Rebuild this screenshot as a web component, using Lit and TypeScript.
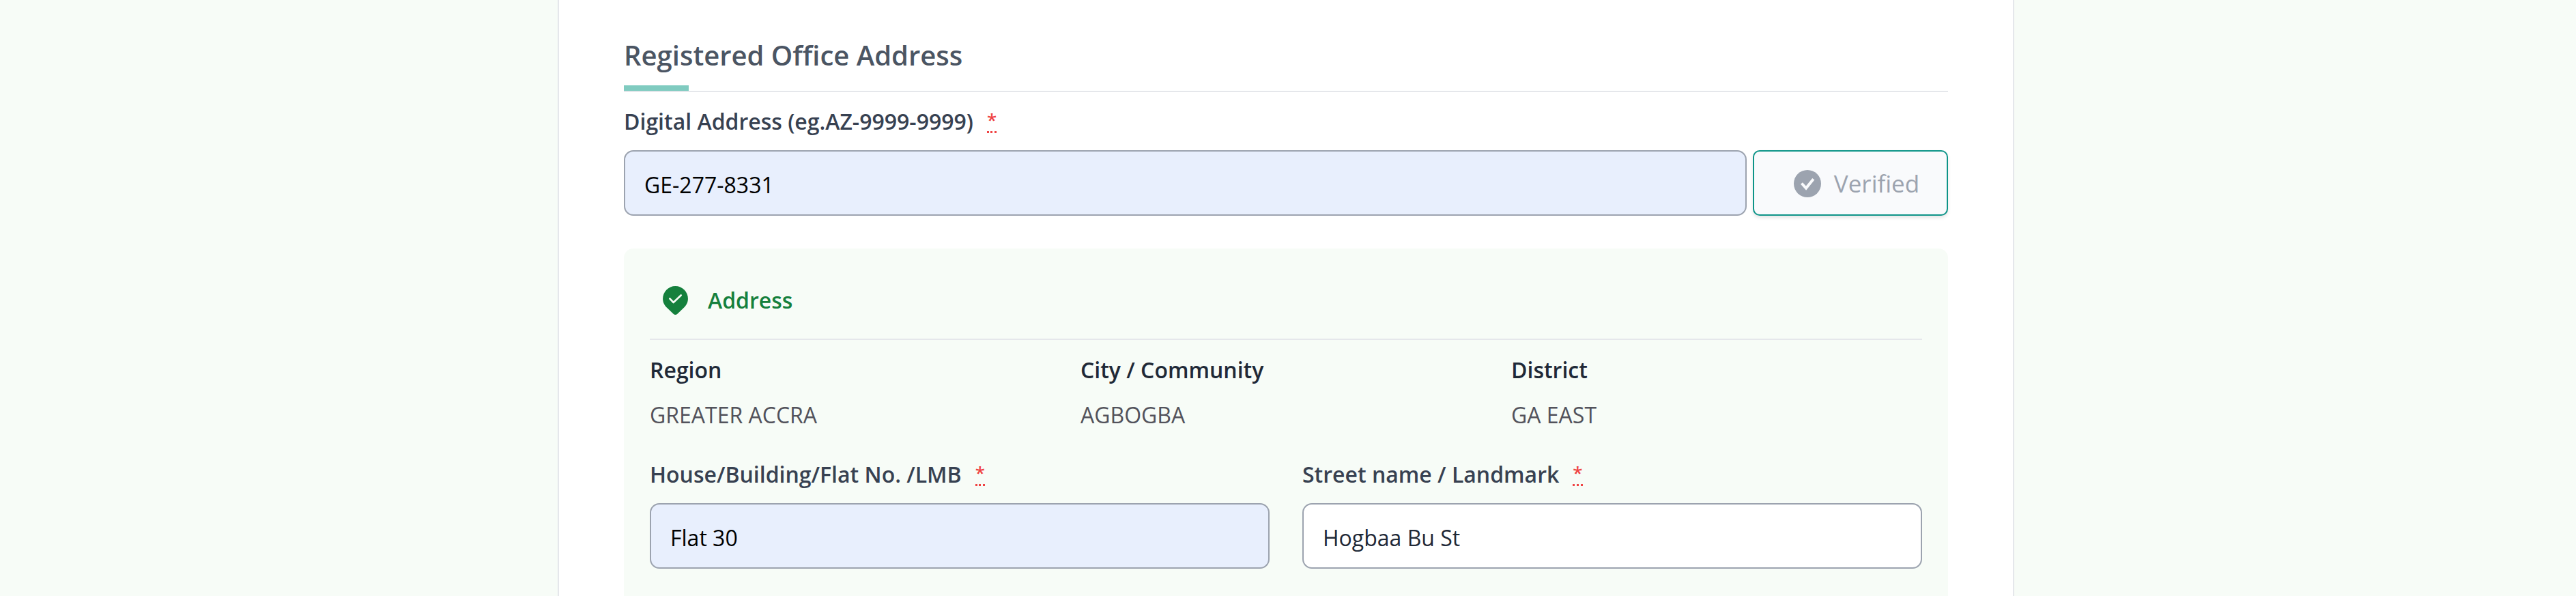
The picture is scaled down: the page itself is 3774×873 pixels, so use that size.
import { LitElement, html, css } from "lit";
import { customElement, property, state } from "lit/decorators.js";
import { classMap } from "lit/directives/class-map.js";

@customElement("text-field")
class TextField extends LitElement {
  @property() label = "";
  @property() value = "";
  @property({ type: Boolean }) filled = false;

  static styles = css`
    :host {
      display: block;
      min-width: 0;
    }
    .label {
      display: flex;
      align-items: flex-start;
      gap: 20px;
      height: 40px;
      margin-bottom: 22px;
      line-height: 40px;
      font-weight: 600;
      color: #374151;
      white-space: nowrap;
    }
    .required {
      border-bottom: 3px dotted #ef4444;
      font-size: 26px;
      font-weight: 600;
      line-height: 34px;
      color: #ef4444;
      text-decoration: none;
    }
    .row {
      display: flex;
      gap: 9px;
    }
    .input {
      flex: 1;
      min-width: 0;
      height: 96px;
      box-sizing: border-box;
      margin: 0;
      padding: 4px 28px 0;
      border: 2px solid #9ca3af;
      border-radius: 14px;
      background: #fff;
      font: inherit;
      color: #1f2937;
    }
    .filled {
      background: #e8effd;
      color: #000;
    }
  `;

  render() {
    return html`
      <label class="label" for="field">
        <span>${this.label}</span>
        <abbr class="required" title="required">*</abbr>
      </label>
      <div class="row">
        <input
          id="field"
          type="text"
          required
          class=${classMap({ input: true, filled: this.filled })}
          .value=${this.value}
        />
        <slot></slot>
      </div>
    `;
  }
}

@customElement("app-root")
class AppRoot extends LitElement {
  @state() private details = [
    { name: "Region", value: "GREATER ACCRA" },
    { name: "City / Community", value: "AGBOGBA" },
    { name: "District", value: "GA EAST" },
  ];

  static styles = css`
    :host {
      display: block;
      box-sizing: border-box;
      height: 100vh;
      overflow-y: auto;
      scrollbar-width: none;
      padding-right: 6px;
      background: #f7fcf7;
      font-family: "Open Sans", "Noto Sans", sans-serif;
      font-size: 32px;
      line-height: 40px;
      color: #1f2937;
    }
    .card {
      box-sizing: border-box;
      max-width: 2134px;
      min-height: 100%;
      margin: 0 auto;
      padding: 57px 95px 0;
      border: solid #e5e7eb;
      border-width: 0 2px;
      background: #fff;
    }
    .title {
      margin: 0;
      font-size: 40px;
      font-weight: 600;
      line-height: 48px;
      color: #4b5563;
    }
    .heading {
      margin-bottom: 23px;
      border-bottom: 2px solid #e5e7eb;
    }
    .accent {
      width: 95px;
      height: 8px;
      margin-top: 20px;
      background: #80cbc0;
    }
    .verify {
      display: flex;
      align-items: center;
      justify-content: center;
      gap: 19px;
      width: 286px;
      height: 96px;
      box-sizing: border-box;
      padding: 2px 0 0 18px;
      border: 2px solid #0d9488;
      border-radius: 10px;
      background: #f9fafc;
      box-shadow: 0 3px 5px rgba(0, 0, 0, 0.1);
      font: inherit;
      font-size: 35px;
      color: #9ca3af;
    }
    .check {
      width: 40px;
      height: 40px;
    }
    .panel {
      margin-top: 48px;
      padding: 48px 38px;
      border-radius: 14px;
      background: #f7fcf7;
    }
    .panel-head {
      display: flex;
      align-items: center;
      gap: 29px;
      height: 56px;
      padding: 0 0 28px 19px;
      border-bottom: 2px solid #e5e7eb;
      color: #15803d;
    }
    .panel-title {
      margin: 0;
      font-size: 32px;
      font-weight: 600;
    }
    .pin {
      width: 37px;
      height: 42px;
    }
    .details {
      display: grid;
      grid-template-columns: repeat(3, 1fr);
      gap: 29px;
      margin: 24px 0 47px;
    }
    .name {
      margin-bottom: 26px;
      font-weight: 600;
    }
    .value {
      margin: 0;
      color: #52525b;
    }
    .fields {
      display: grid;
      grid-template-columns: 1fr 1fr;
      gap: 48px;
      padding-bottom: 24px;
    }
  `;

  render() {
    return html`
      <main class="card">
        <header class="heading">
          <h2 class="title">Registered Office Address</h2>
          <div class="accent"></div>
        </header>
        <text-field label="Digital Address (eg.AZ-9999-9999)" value="GE-277-8331" filled>
          <button class="verify" type="button" disabled>
            <svg class="check" viewBox="0 0 40 40" aria-hidden="true">
              <circle cx="20" cy="20" r="20" fill="currentColor" />
              <path d="M11.5 19.5 18 26.6 28.8 13.2" fill="none" stroke="#f9fafc" stroke-width="4" />
            </svg>
            Verified
          </button>
        </text-field>
        <section class="panel">
          <div class="panel-head">
            <svg class="pin" viewBox="0 0 36 41" aria-hidden="true">
              <path
                fill="currentColor"
                d="M18 0A18 18 0 0 0 0 18c0 5.6 2.6 9.8 6.2 13.2l8.9 8.5a4.2 4.2 0 0 0 5.8 0l8.9-8.5C33.4 27.8 36 23.6 36 18A18 18 0 0 0 18 0z"
              />
              <path
                d="M10 18 15.2 23.4 26 13.2"
                fill="none"
                stroke="#f7fcf7"
                stroke-width="2.6"
                stroke-linecap="round"
                stroke-linejoin="round"
              />
            </svg>
            <h3 class="panel-title">Address</h3>
          </div>
          <dl class="details">
            ${this.details.map(
              (d) => html`<div>
                <dt class="name">${d.name}</dt>
                <dd class="value">${d.value}</dd>
              </div>`
            )}
          </dl>
          <div class="fields">
            <text-field label="House/Building/Flat No. /LMB" value="Flat 30" filled></text-field>
            <text-field label="Street name / Landmark" value="Hogbaa Bu St"></text-field>
          </div>
        </section>
      </main>
    `;
  }
}
